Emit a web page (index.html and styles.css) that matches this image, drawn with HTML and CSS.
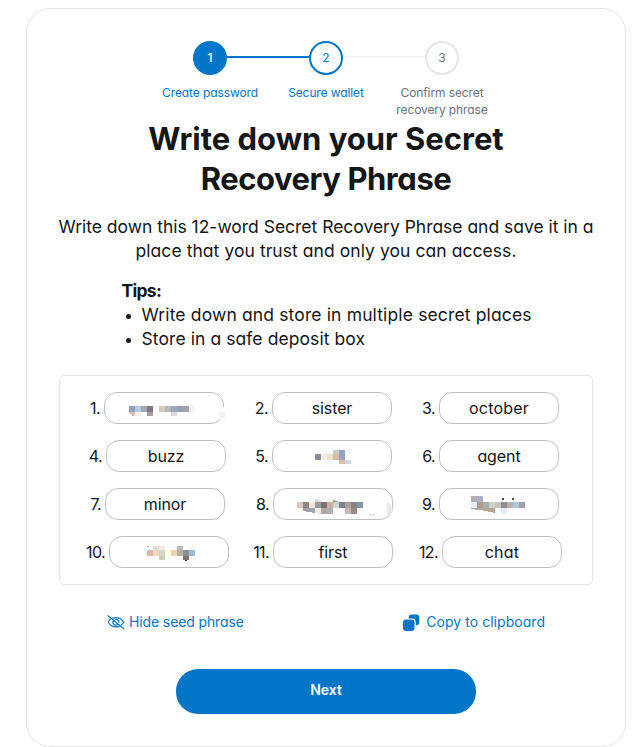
FILE: index.html
```html
<!DOCTYPE html>
<html lang="en">
<head>
<meta charset="utf-8">
<title>Secret Recovery Phrase</title>
<link rel="stylesheet" href="styles.css">
</head>
<body>
<main class="card">
  <ol class="steps">
    <li class="step step-done"><span class="step-dot">1</span><span class="step-label">Create password</span></li>
    <li class="step step-active"><span class="step-dot">2</span><span class="step-label">Secure wallet</span></li>
    <li class="step"><span class="step-dot">3</span><span class="step-label">Confirm secret<br>recovery phrase</span></li>
  </ol>
  <h1>Write down your Secret<br><span class="title-end">Recovery Phrase</span></h1>
  <p class="intro">Write down this 12-word Secret Recovery Phrase and save it in a<br><span class="intro-end">place that you trust and only you can access.</span></p>
  <section class="tips">
    <strong>Tips:</strong>
    <ul>
      <li class="tip-wide">Write down and store in multiple secret places</li>
      <li class="tip">Store in a safe deposit box</li>
    </ul>
  </section>
  <section class="phrase">
    <div class="word"><span class="num n20">1.</span><span class="chip"><svg class="mask" viewBox="0 0 126 32" width="126" height="32">
      <path fill="#fff" d="M116 15h6v13h-6z"/><path fill="#95a1ba" d="M25 14h6v6h-6z"/><path fill="#b1cbe1" d="M31 14h6v6h-6z"/><path fill="#a1abb1" d="M37 14h6v6h-6z"/><path fill="#7e7985" d="M43 14h6v6h-6z"/><path fill="#d4c2bf" d="M25 20h6v4h-3z"/><path fill="#fceee5" d="M31 20h6v4h-6z"/><path fill="#a6a0a5" d="M43 20h6v4h-6z"/><path fill="#d2cabb" d="M55 14h6v6h-6z"/><path fill="#b8b8ba" d="M61 14h6v6h-6z"/><path fill="#a0a6ba" d="M67 14h6v6h-6z"/><path fill="#929fb8" d="M73 14h6v6h-6z"/><path fill="#aaa19b" d="M79 14h6v6h-6z"/><path fill="#ebf5ff" d="M85 14h6v6h-6z"/><path fill="#dbdbde" d="M67 20h6v4h-6z"/><path fill="#f2f3f6" d="M115 20h6v6h-6z"/></svg></span></div>
    <div class="word"><span class="num n21">2.</span><span class="chip">sister</span></div>
    <div class="word"><span class="num n21">3.</span><span class="chip wide">october</span></div>
    <div class="word"><span class="num n22">4.</span><span class="chip">buzz</span></div>
    <div class="word"><span class="num n21">5.</span><span class="chip"><svg class="mask" viewBox="0 0 126 32" width="126" height="32">
      <path fill="#8c8e99" d="M43 14h6v6h-6z"/><path fill="#fdecdf" d="M49 14h6v6h-6z"/><path fill="#e6e3cc" d="M55 14h6v6h-6z"/><path fill="#d8bbaa" d="M61 14h6v6h-6zM67 20h6v4h-6z"/><path fill="#c9c9cc" d="M61 10h6v4h-6z"/><path fill="#9aa0bb" d="M67 10h6v10h-6z"/><path fill="#f0faff" d="M73 10h6v4h-6zM55 20h6v4h-6z"/><path fill="#ccd6df" d="M73 20h6v4h-6z"/></svg></span></div>
    <div class="word"><span class="num n21">6.</span><span class="chip">agent</span></div>
    <div class="word"><span class="num n21">7.</span><span class="chip">minor</span></div>
    <div class="word"><span class="num n22">8.</span><span class="chip"><svg class="mask" viewBox="0 0 126 32" width="126" height="32">
      <path fill="#d8c8c0" d="M24 14h6v6h-6z"/><path fill="#8e8782" d="M30 14h6v6h-6z"/><path fill="#f2e6da" d="M36 14h6v6h-6z"/><path fill="#999b9f" d="M42 14h6v6h-6z"/><path fill="#7b7175" d="M48 14h6v6h-6z"/><path fill="#c6b59c" d="M54 14h6v6h-6z"/><path fill="#cdd6d6" d="M60 14h6v6h-6z"/><path fill="#817f8c" d="M66 14h6v6h-6z"/><path fill="#aaa39f" d="M72 14h6v6h-6z"/><path fill="#8a817c" d="M78 14h6v6h-6z"/><path fill="#7f95ab" d="M84 14h6v6h-6z"/><path fill="#a1a2ae" d="M30 20h12v5l-12-2z"/><path fill="#f5ece3" d="M42 20h6v6l-6-1z"/><path fill="#b2a6a2" d="M48 20h6v6h-6z"/><path fill="#adafb4" d="M54 20h6v6h-6z"/><path fill="#c5bab0" d="M72 20h6v6h-6z"/><path fill="#958c88" d="M78 20h6v6h-6z"/><path fill="#d7d9dc" d="M42 11l6 1v2h-6z"/><path fill="#94989c" d="M60 12l6 2h-6z"/><path fill="#e7e9eb" d="M96 26h6v2h-6zM114 14q5 3 5 7t-3 6l-2 1z"/></svg></span></div>
    <div class="word"><span class="num n21">9.</span><span class="chip"><svg class="mask" viewBox="0 0 126 32" width="126" height="32">
      <path fill="#b5aaaf" d="M32 8h6v6h-6z"/><path fill="#a9b2c8" d="M38 8h6v6h-6z"/><path fill="#e0edfa" d="M32 14h6v6h-6zM62 20h6v6h-6z"/><path fill="#a99c8b" d="M38 14h6v6h-6z"/><path fill="#a5afae" d="M44 14h6v6h-6z"/><path fill="#d3cfc5" d="M50 14h6v6h-6z"/><path fill="#c3c5c5" d="M56 14h6v6h-6z"/><path fill="#988e8d" d="M62 14h6v6h-6z"/><path fill="#baafaa" d="M68 14h6v6h-6z"/><path fill="#a9c8e2" d="M74 14h6v6h-6z"/><path fill="#a49da1" d="M80 14h6v6h-6z"/><path fill="#b5a798" d="M32 20h24v5l-12-2.500-12-1.500z"/><path fill="#444" d="M63 10h2v2h-2zM73 10h2v2h-2z"/></svg></span></div>
    <div class="word"><span class="num n25">10.</span><span class="chip"><svg class="mask" viewBox="0 0 126 32" width="126" height="32">
      <path fill="#d8b9a5" d="M38 14h6v6h-6z"/><path fill="#f1d7bd" d="M44 14h6v6h-6z"/><path fill="#cdd6c8" d="M50 14h6v6h-6z"/><path fill="#fefee0" d="M56 14h6v6h-6z"/><path fill="#edd2b8" d="M62 14h6v6h-6z"/><path fill="#b8aea2" d="M68 14h6v6h-6z"/><path fill="#8b9392" d="M74 14h6v6h-6z"/><path fill="#9db9d8" d="M80 14h6v6h-6z"/><path fill="#dddde1" d="M44 10h6v4h-6z"/><path fill="#f4e8e0" d="M50 10h6v4h-6z"/><path fill="#b9bdc0" d="M68 10h6v4h-6z"/><path fill="#cfccb5" d="M50 20h6v4h-6z"/><path fill="#836c68" d="M74 20h6v4h-6z"/><path fill="#333" d="M76 24h2v1h-2z"/><path fill="#b9b0aa" d="M38 10h2v1h-2z"/></svg></span></div>
    <div class="word"><span class="num n22">11.</span><span class="chip">first</span></div>
    <div class="word"><span class="num n24">12.</span><span class="chip wide">chat</span></div>
  </section>
  <div class="links">
    <a class="link hide"><svg width="18" height="16" viewBox="0 0 18 16" fill="none" stroke="#0376c9" stroke-width="1.200" stroke-linecap="round"><path d="M1 1.800 16.800 14.800M5.800 4.100A8.500 8.500 0 0 1 9 3.600c3.300 0 6 1.700 7.700 4.600a10 10 0 0 1-2.400 2.700M3.200 5.300A10 10 0 0 0 1.300 8.200C3 11.200 5.700 12.900 9 12.900c1.100 0 2.100-.2 3-.5M6.300 6.700a3 3 0 0 0 4.600 3.700M8.700 5.400a3 3 0 0 1 3.300 2.700"/></svg><span>Hide seed phrase</span></a>
    <a class="link copy"><svg width="17" height="17" viewBox="0 0 17 17" fill="#0376c9"><rect x="0" y="5.500" width="11.500" height="11.500" rx="3"/><path d="M8.500.500h5A2.800 2.800 0 0 1 16.300 3.300v5.200c0 1.600-1 2.700-2.800 2.800h-.8V7.800c0-2.100-1.100-3.300-3.300-3.300H5.700v-1.200C5.700 1.500 6.900.500 8.500.500z"/></svg><span>Copy to clipboard</span></a>
  </div>
  <button class="next">Next</button>
</main>
</body>
</html>
```
FILE: styles.css
```css
* { box-sizing: border-box; }
body {
  margin: 0;
  background: #fff;
  color: #141618;
  font-family: Inter, "Liberation Sans", sans-serif;
  font-feature-settings: "cv11";
}
.card {
  width: 600px;
  height: 739px;
  margin: 8px 0 0 26px;
  padding: 32px 32px 0;
  border: 1px solid #e4e5e7;
  border-radius: 24px;
  display: flex;
  flex-direction: column;
  align-items: center;
}
.steps {
  list-style: none;
  margin: 0;
  padding: 0;
  height: 78px;
  display: grid;
  grid-template-columns: repeat(3, 116px);
}
.step {
  display: flex;
  flex-direction: column;
  align-items: center;
  position: relative;
  font-size: 12px;
  color: #6a737d;
}
.step-dot {
  width: 34px;
  height: 34px;
  border: 2px solid #e4e6e8;
  border-radius: 50%;
  display: flex;
  align-items: center;
  justify-content: center;
  padding-bottom: 1px;
}
.step:not(:last-child)::after {
  content: "";
  position: absolute;
  top: 15px;
  left: 75px;
  width: 82px;
  height: 2px;
  background: #f2f3f4;
}
.step-done:not(:last-child)::after { background: #0376c9; }
.step-done, .step-active { color: #0376c9; }
.step-done .step-dot { background: #0376c9; border-color: #0376c9; color: #fff; font-weight: 500; }
.step-active .step-dot { border-color: #0376c9; }
.step-label {
  margin-top: 9px;
  line-height: 17px;
  letter-spacing: -.1px;
  text-align: center;
  white-space: nowrap;
}
h1 {
  margin: 0;
  font-size: 31px;
  line-height: 40px;
  font-weight: 700;
  text-align: center;
  white-space: nowrap;
}
.title-end { letter-spacing: -.45px; }
.intro {
  margin: 16px 0 0;
  font-size: 17.500px;
  line-height: 24px;
  letter-spacing: -.02px;
  text-align: center;
  white-space: nowrap;
}
.intro-end { letter-spacing: .06px; }
.tips {
  width: 409px;
  margin-top: 16px;
  font-size: 17.500px;
  line-height: 24px;
  white-space: nowrap;
}
.tips strong { display: block; font-weight: 700; letter-spacing: -.7px; }
.tips ul { margin: 0; padding-left: 20px; }
.tip { letter-spacing: .08px; }
.tip-wide { letter-spacing: .14px; }
.tips li::marker { font-size: 14px; }
.phrase {
  width: 534px;
  height: 210px;
  margin-top: 24px;
  padding: 16px 0 0 24px;
  border: 1px solid #e4e5e7;
  border-radius: 5px;
  display: grid;
  grid-template-columns: repeat(3, 167px);
  grid-auto-rows: 32px;
  row-gap: 16px;
}
.word { display: flex; align-items: center; font-size: 16px; }
.num {
  padding-right: 4px;
  display: flex;
  justify-content: flex-end;
  flex: none;
  letter-spacing: -.6px;
}
.n20 { width: 20px; }
.n21 { width: 21px; }
.n22 { width: 22px; }
.n24 { width: 24px; }
.n25 { width: 25px; }
.chip {
  position: relative;
  width: 120px;
  height: 32px;
  border: 1px solid #bbc0c5;
  border-radius: 13px;
  display: flex;
  align-items: center;
  justify-content: center;
  letter-spacing: -.1px;
}
.wide { letter-spacing: .2px; }
.mask { position: absolute; top: -1px; left: -1px; shape-rendering: crispEdges; }
.links {
  width: 438px;
  height: 20px;
  margin-top: 27px;
  display: flex;
  justify-content: space-between;
  font-size: 14px;
  color: #0376c9;
}
.link { display: flex; align-items: center; gap: 4px; white-space: nowrap; }
.link span { margin-top: -2px; }
.hide { letter-spacing: -.12px; }
.copy { gap: 6px; letter-spacing: .04px; }
.next {
  width: 300px;
  height: 45px;
  margin-top: 37px;
  padding: 0 0 4px;
  border: 0;
  border-radius: 22px;
  background: #0376c9;
  color: #fff;
  font: 600 14px Inter, "Liberation Sans", sans-serif;
}
```
